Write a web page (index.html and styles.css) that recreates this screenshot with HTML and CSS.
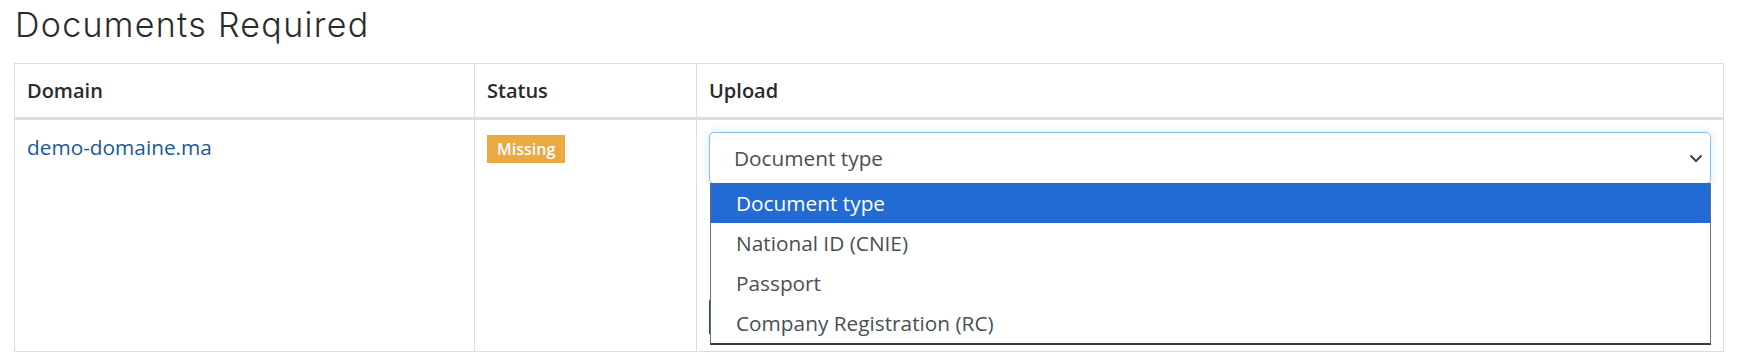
FILE: index.html
```html
<!DOCTYPE html>
<html lang="en">
<head>
  <meta charset="UTF-8">
  <meta name="viewport" content="width=device-width, initial-scale=1.0">
  <title>Documents Required</title>
  <link rel="stylesheet" href="styles.css">
</head>
<body>
  <h2 class="page-title">Documents Required</h2>

  <table class="docs-table">
    <colgroup>
      <col class="col-domain">
      <col class="col-status">
      <col>
    </colgroup>
    <thead>
      <tr>
        <th>Domain</th>
        <th>Status</th>
        <th>Upload</th>
      </tr>
    </thead>
    <tbody>
      <tr>
        <td><a href="#" class="domain-link">demo-domaine.ma</a></td>
        <td><span class="badge badge-missing">Missing</span></td>
        <td class="upload-cell">
          <!-- Document type picker, shown open -->
          <div class="select-wrap">
            <div class="select-box">
              <span>Document type</span>
              <svg class="select-caret" width="14" height="9" viewBox="0 0 14 9">
                <path d="M1.5 1.5 L7 7 L12.5 1.5" fill="none" stroke="#444" stroke-width="2"/>
              </svg>
            </div>
            <ul class="select-menu">
              <li class="active">Document type</li>
              <li>National ID (CNIE)</li>
              <li>Passport</li>
              <li>Company Registration (RC)</li>
            </ul>
          </div>
          <div class="file-drop"></div>
          <button class="btn-upload" aria-label="Upload"></button>
        </td>
      </tr>
    </tbody>
  </table>
</body>
</html>
```

FILE: styles.css
```css
/* General Reset */
body, h2, ul, button {
  margin: 0;
  padding: 0;
  box-sizing: border-box;
}

body {
  font-family: 'Open Sans', sans-serif;
  color: #212529;
  background-color: #ffffff;
  padding: 0 14px;
}

/* Title */
.page-title {
  font-family: 'Inter', sans-serif;
  font-weight: 300;
  font-size: 34px;
  line-height: 40px;
  letter-spacing: 1.3px;
  color: #2b2b2b;
  padding: 5px 0 0 1px;
}

/* Table */
.docs-table {
  width: 100%;
  margin-top: 18px;
  border-collapse: collapse;
  border: 1px solid #dddddd;
  table-layout: fixed;
}

.col-domain {
  width: 460px;
}

.col-status {
  width: 222px;
}

.docs-table th,
.docs-table td {
  border: 1px solid #dddddd;
  padding: 12px 12px;
  text-align: left;
  vertical-align: top;
  font-size: 20.8px;
  line-height: 30px;
}

.docs-table th {
  font-size: 20px;
  font-weight: 600;
  color: #2a2a2a;
  padding-bottom: 11px;
  border-bottom: 3px solid #dddddd;
}

.docs-table td {
  padding-bottom: 15px;
}

.domain-link {
  color: #1a5a96;
  text-decoration: none;
}

/* Badge */
.badge {
  display: inline-block;
  margin-top: 3px;
  padding: 0 10px;
  font-size: 16px;
  font-weight: 600;
  line-height: 28px;
  color: #ffffff;
  vertical-align: top;
}

.badge-missing {
  background-color: #eba942;
}

/* Upload column */
.upload-cell {
  padding-right: 11px;
}

.select-wrap {
  position: relative;
}

.select-box {
  display: flex;
  align-items: center;
  justify-content: space-between;
  height: 50px;
  padding: 0 7px 0 24px;
  border: 1px solid #86bdf5;
  border-radius: 5px;
  box-shadow: 0 0 6px 2px rgba(80, 160, 255, 0.15);
  color: #4a4f55;
  background-color: #ffffff;
}

.select-caret {
  display: block;
}

.select-menu {
  position: absolute;
  top: 51px;
  left: 0;
  right: 0;
  list-style: none;
  background-color: #ffffff;
  border: 1px solid #6b6b6b;
  border-top: none;
  border-bottom: 2px solid #3a3a3a;
  margin-left: 1px;
  z-index: 2;
}

.select-menu li {
  height: 40px;
  line-height: 40px;
  padding-left: 25px;
  color: #4a4f55;
}

.select-menu li.active {
  background-color: #226bd4;
  color: #ffffff;
}

.file-drop {
  height: 86px;
  margin: 14px 0;
}

.btn-upload {
  display: block;
  width: 160px;
  height: 38px;
  border: none;
  border-radius: 4px;
  background-color: #1d4f8a;
  cursor: pointer;
}
```
